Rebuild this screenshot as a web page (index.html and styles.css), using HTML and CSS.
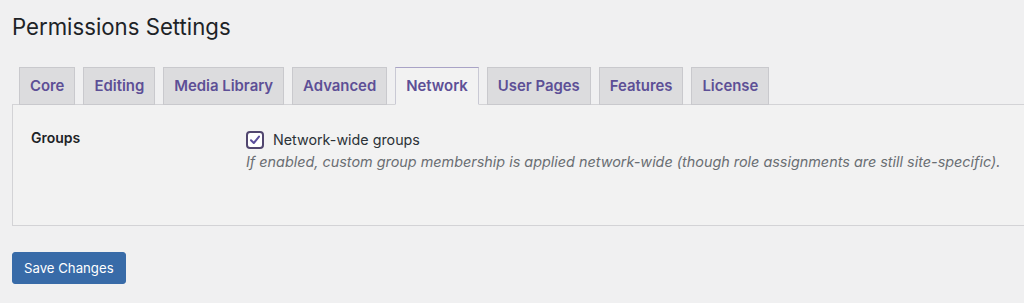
FILE: index.html
```html
<!DOCTYPE html>
<html>
<head>
	<title>Permissions Settings</title>
	<meta charset="UTF-8">
	<link rel="stylesheet" href="styles.css">
</head>
<body>
	<div class="wrap">
		<h1 class="page-title">Permissions Settings</h1>

		<nav class="tab-bar">
			<a class="tab" href="#">Core</a>
			<a class="tab" href="#">Editing</a>
			<a class="tab" href="#">Media Library</a>
			<a class="tab" href="#">Advanced</a>
			<a class="tab tab-active" href="#">Network</a>
			<a class="tab" href="#">User Pages</a>
			<a class="tab" href="#">Features</a>
			<a class="tab" href="#">License</a>
		</nav>

		<div class="panel">
			<div class="row">
				<div class="row-label">Groups</div>
				<div class="row-field">
					<label class="check">
						<span class="check-box">
							<svg width="12" height="12" viewBox="0 0 12 12">
								<path d="M2 6.2 L4.8 9 L10 2.6" fill="none" stroke="#5b4e9c" stroke-width="2" stroke-linecap="round" stroke-linejoin="round"/>
							</svg>
						</span>
						Network-wide groups
					</label>
					<p class="description">If enabled, custom group membership is applied network-wide (though role assignments are still site-specific).</p>
				</div>
			</div>
		</div>

		<button class="btn-primary">Save Changes</button>
	</div>
</body>
</html>
```

FILE: styles.css
```css
* {
	margin: 0;
	padding: 0;
	box-sizing: border-box;
}

html, body {
	width: 100%;
	height: 100%;
	background: #f0f0f1;
	font-family: Inter, "Liberation Sans", sans-serif;
	color: #1d2327;
	overflow: hidden;
}

.wrap {
	padding-left: 12px;
}

.page-title {
	font-size: 22.2px;
	font-weight: 400;
	line-height: 30px;
	padding-top: 12px;
	color: #1d2327;
}

.tab-bar {
	display: flex;
	margin-top: 25px;
	padding-left: 7px;
	gap: 8px;
}

.tab {
	display: block;
	padding: 5px 10px;
	font-size: 14.9px;
	font-weight: 600;
	line-height: 26px;
	color: #5d4f96;
	text-decoration: none;
	background: #dcdcde;
	border: 1px solid #c9c9cd;
	margin-bottom: -1px;
	position: relative;
	z-index: 1;
}

.tab-active {
	background: #f2f2f2;
	border-color: #c9c9d4;
	border-top-color: #a9a3c6;
	border-bottom-color: #f2f2f2;
}

.panel {
	background: #f2f2f2;
	border: 1px solid #d3d3d6;
	border-right: none;
	padding: 23px 0 0 18px;
	height: 122px;
}

.row {
	display: flex;
}

.row-label {
	width: 215px;
	font-size: 14px;
	font-weight: 600;
	line-height: 20px;
	color: #1d2327;
}

.row-field {
	line-height: 22px;
	margin-top: 1px;
}

.check {
	display: flex;
	align-items: center;
	gap: 9px;
	font-size: 14.3px;
	color: #2c3338;
}

.check-box {
	width: 18px;
	height: 18px;
	border: 2px solid #51466f;
	border-radius: 4px;
	background: #fff;
	display: flex;
	align-items: center;
	justify-content: center;
}

.description {
	font-style: italic;
	color: #6a6e73;
	font-size: 14.4px;
}

.btn-primary {
	margin-top: 26px;
	height: 32px;
	padding: 0 11px;
	font-family: Inter, "Liberation Sans", sans-serif;
	font-size: 13.2px;
	color: #fff;
	background: #386ba8;
	border: 1px solid #386ba8;
	border-radius: 3px;
	cursor: pointer;
}
```
